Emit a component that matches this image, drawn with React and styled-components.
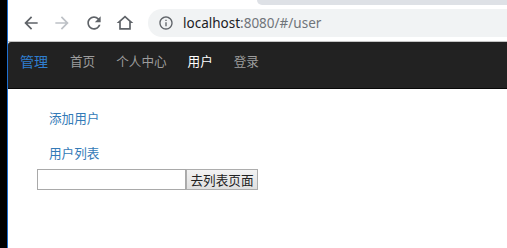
import React from "react";
import styled, { createGlobalStyle } from "styled-components";

const GlobalStyle = createGlobalStyle`
  html, body {
    margin: 0;
    padding: 0;
    overflow: hidden;
    background: #ffffff;
  }
`;

const icons = {
  back: "M20 11H7.83l5.59-5.59L12 4l-8 8 8 8 1.41-1.41L7.83 13H20v-2z",
  forward: "M12 4l-1.41 1.41L16.17 11H4v2h12.17l-5.58 5.59L12 20l8-8z",
  reload:
    "M17.65 6.35C16.2 4.9 14.21 4 12 4c-4.42 0-7.99 3.58-7.99 8s3.57 8 7.99 8c3.73 0 6.84-2.55 7.73-6h-2.08c-.82 2.33-3.04 4-5.65 4-3.31 0-6-2.69-6-6s2.69-6 6-6c1.66 0 3.14.69 4.22 1.78L13 11h7V4l-2.35 2.35z",
  home: "M12 3L2 12h3v8h14v-8h3L12 3zm5 15H7v-7.81l5-4.5 5 4.5V18z",
};

const App = () => {
  const links = [
    { label: "首页" },
    { label: "个人中心" },
    { label: "用户", active: true },
    { label: "登录" },
  ];

  return (
    <>
      <GlobalStyle />
      <Screen>
        <Desk />
        <Window>
          <TabStrip>
            <ActiveTab />
            <TabRest />
          </TabStrip>
          <Toolbar>
            {["back", "forward", "reload", "home"].map((name) => (
              <NavButton key={name} $faded={name === "forward"}>
                <svg width="20" height="20" viewBox="0 0 24 24">
                  <path d={icons[name]} fill="currentColor" />
                </svg>
              </NavButton>
            ))}
            <Omnibox>
              <InfoIcon>
                <svg width="16" height="16" viewBox="0 0 24 24">
                  <path
                    d="M11 7h2v2h-2zm0 4h2v6h-2zm1-9C6.48 2 2 6.48 2 12s4.48 10 10 10 10-4.48 10-10S17.52 2 12 2zm0 18c-4.41 0-8-3.59-8-8s3.59-8 8-8 8 3.59 8 8-3.59 8-8 8z"
                    fill="currentColor"
                  />
                </svg>
              </InfoIcon>
              <Url>
                <Host>localhost</Host>:8080/#/user
              </Url>
            </Omnibox>
          </Toolbar>
          <Page>
            <Navbar>
              <Brand>管理</Brand>
              {links.map((link) => (
                <NavLink key={link.label} $active={link.active}>
                  {link.label}
                </NavLink>
              ))}
            </Navbar>
            <Content>
              <LinkList>
                <LinkItem>
                  <TextLink href="#/user/add">添加用户</TextLink>
                </LinkItem>
                <LinkItem>
                  <TextLink href="#/user/list">用户列表</TextLink>
                </LinkItem>
              </LinkList>
              <Form>
                <Input type="text" />
                <Button>去列表页面</Button>
              </Form>
            </Content>
          </Page>
        </Window>
      </Screen>
    </>
  );
};

export default App;

const Screen = styled.div`
  display: flex;
  height: 248px;
  width: 507px;
`;

const Desk = styled.div`
  width: 7px;
  background-color: #000000;
`;

const Window = styled.div`
  flex: 1;
  display: flex;
  flex-direction: column;
  border-left: 1px solid #1f6fcf;
  background-color: #ffffff;
  min-width: 0;
`;

const TabStrip = styled.div`
  display: flex;
  height: 5px;
`;

const ActiveTab = styled.div`
  width: 249px;
  background-color: #ffffff;
`;

const TabRest = styled.div`
  flex: 1;
  background-color: #dee1e6;
  border-bottom-left-radius: 5px;
`;

const Toolbar = styled.div`
  display: flex;
  align-items: center;
  height: 37px;
  padding: 3px 0 4px 7px;
  box-sizing: border-box;
  border-bottom: 1px solid #c4c4c4;
`;

const NavButton = styled.div`
  width: 31.5px;
  height: 28px;
  display: flex;
  align-items: center;
  justify-content: center;
  color: ${(p) => (p.$faded ? "#bdc1c6" : "#5f6368")};
`;

const Omnibox = styled.div`
  flex: 1;
  display: flex;
  align-items: center;
  height: 28px;
  margin-left: 7px;
  padding-left: 10px;
  background-color: #f1f3f4;
  border-radius: 14px 0 0 14px;
`;

const InfoIcon = styled.div`
  display: flex;
  color: #5f6368;
  margin-right: 9px;
`;

const Url = styled.div`
  font-family: "Noto Sans", "Open Sans", sans-serif;
  font-size: 13.5px;
  color: #70757a;
  white-space: nowrap;
`;

const Host = styled.span`
  color: #202124;
`;

const Page = styled.div`
  flex: 1;
  font-family: "Noto Sans CJK SC", "Noto Sans", sans-serif;
`;

const Navbar = styled.div`
  display: flex;
  align-items: flex-start;
  height: 46px;
  background-color: #222222;
  border-bottom: 1px solid #080808;
  border-top-left-radius: 3px;
`;

const Brand = styled.div`
  font-size: 14px;
  line-height: 18px;
  padding: 10px 11.5px 0 12px;
  color: #2f7fd0;
`;

const NavLink = styled.div`
  font-size: 12.6px;
  line-height: 18px;
  padding: 10px 10.5px 0;
  color: ${(p) => (p.$active ? "#ffffff" : "#9d9d9d")};
`;

const Content = styled.div`
  padding: 20px 0 0 29px;
`;

const LinkList = styled.div`
  display: flex;
  flex-direction: column;
  gap: 17px;
  padding-left: 12px;
`;

const LinkItem = styled.div`
  font-size: 12.6px;
  line-height: 18px;
`;

const TextLink = styled.a`
  color: #337ab7;
  text-decoration: none;
`;

const Form = styled.div`
  display: flex;
  margin-top: 7px;
`;

const Input = styled.input`
  width: 149px;
  height: 21px;
  box-sizing: border-box;
  border: 1px solid #a9a9a9;
  padding: 0 2px;
  margin: 0;
  outline: none;
`;

const Button = styled.button`
  height: 21px;
  width: 72px;
  box-sizing: border-box;
  margin: 0;
  padding: 0 3px;
  border: 1px solid #adadad;
  background: linear-gradient(#f2f2f2, #e0e0e0);
  font-family: "Noto Sans CJK SC", sans-serif;
  font-size: 12.6px;
  line-height: 19px;
  color: #222222;
`;
